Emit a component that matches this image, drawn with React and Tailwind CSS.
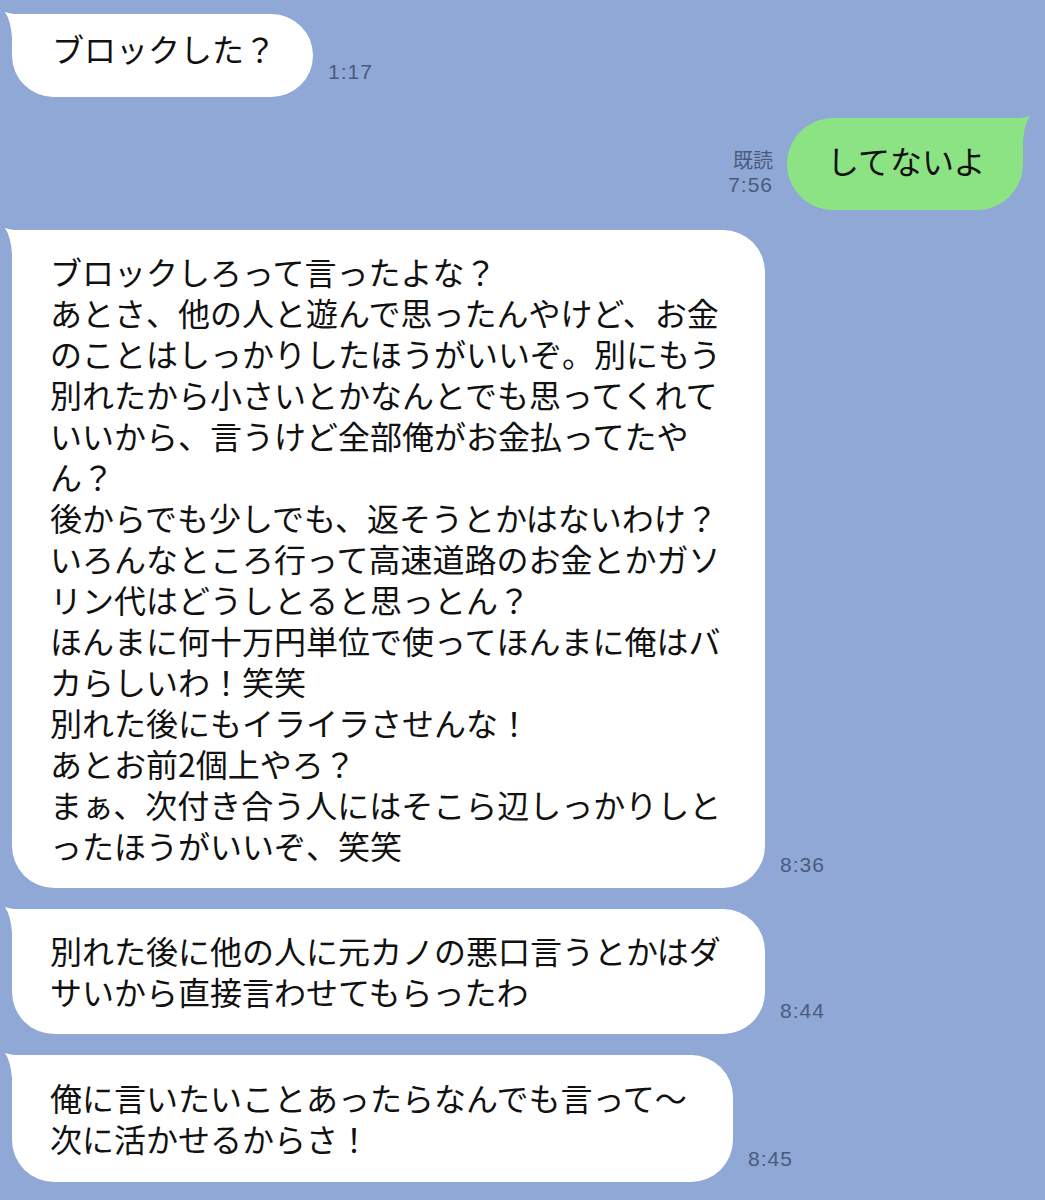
const jp = { fontFamily: '"Noto Sans CJK JP", "Noto Sans", sans-serif' };

const messages = [
  {
    id: 1,
    width: "w-[753px]",
    height: "h-[658px]",
    pad: "pt-[21px]",
    time: "8:36",
    lines: [
      "ブロックしろって言ったよな？",
      "あとさ、他の人と遊んで思ったんやけど、お金",
      "のことはしっかりしたほうがいいぞ。別にもう",
      "別れたから小さいとかなんとでも思ってくれて",
      "いいから、言うけど全部俺がお金払ってたや",
      "ん？",
      "後からでも少しでも、返そうとかはないわけ？",
      "いろんなところ行って高速道路のお金とかガソ",
      "リン代はどうしとると思っとん？",
      "ほんまに何十万円単位で使ってほんまに俺はバ",
      "カらしいわ！笑笑",
      "別れた後にもイライラさせんな！",
      "あとお前2個上やろ？",
      "まぁ、次付き合う人にはそこら辺しっかりしと",
      "ったほうがいいぞ、笑笑",
    ],
  },
  {
    id: 2,
    width: "w-[753px]",
    height: "h-[125px]",
    pad: "pt-[21px]",
    time: "8:44",
    lines: ["別れた後に他の人に元カノの悪口言うとかはダ", "サいから直接言わせてもらったわ"],
  },
  {
    id: 3,
    width: "w-[721px]",
    height: "h-[127px]",
    pad: "pt-[22px]",
    time: "8:45",
    lines: ["俺に言いたいことあったらなんでも言って〜", "次に活かせるからさ！"],
  },
];

const LeftTail = () => (
  <svg
    className="absolute -left-[8px] -top-[2px]"
    width="34"
    height="34"
    viewBox="0 0 34 34"
  >
    <path d="M1 0 Q 14 4 32 2 L 8 2 L 8 26 Q 7 9 1 0 Z" fill="#ffffff" />
  </svg>
);

const RightTail = () => (
  <svg
    className="absolute -right-[8px] -top-[2px]"
    width="34"
    height="34"
    viewBox="0 0 34 34"
  >
    <path d="M33 0 Q 20 4 2 2 L 26 2 L 26 26 Q 27 9 33 0 Z" fill="#8ce383" />
  </svg>
);

const Time = ({ children, className = "" }) => (
  <div
    className={`text-[21px] leading-[24px] tracking-[1px] text-[#4b5b7e] ${className}`}
    style={{ fontFamily: '"Liberation Sans", Arial, sans-serif' }}
  >
    {children}
  </div>
);

export default function App() {
  return (
    <div className="min-h-[1200px] w-[1045px] bg-[#8fa8d5] pt-[14px] overflow-hidden" style={jp}>
      {/* first incoming */}
      <div className="flex items-end pl-3">
        <div className="relative w-[301px] h-[83px] bg-white rounded-[42px] rounded-tl-none pl-[40px] pt-[14px]">
          <LeftTail />
          <div className="text-[32px] leading-[41px] text-[#111] whitespace-nowrap">ブロックした？</div>
        </div>
        <Time className="ml-[15px] mb-[13px]">1:17</Time>
      </div>

      {/* outgoing */}
      <div className="flex items-end justify-end pr-[22px] mt-[21px]">
        <div className="flex flex-col items-end mr-[14px] mb-[13px] text-[#4b5b7e]">
          <div className="text-[20px] leading-[26px]">既読</div>
          <Time className="tracking-[0.5px]">7:56</Time>
        </div>
        <div className="relative w-[236px] h-[92px] bg-[#8ce383] rounded-[46px] rounded-tr-none pl-[40px] pt-[22px]">
          <RightTail />
          <div className="text-[32px] leading-[41px] text-[#111] whitespace-nowrap">してないよ</div>
        </div>
      </div>

      {messages.map((m, i) => (
        <div key={m.id} className={`flex items-end pl-3 ${i === 0 ? "mt-[20px]" : "mt-[21px]"}`}>
          <div className={`relative ${m.width} ${m.height} ${m.pad} bg-white rounded-[42px] rounded-tl-none pl-[38px]`}>
            <LeftTail />
            {m.lines.map((l, j) => (
              <div key={j} className="text-[32px] leading-[41px] text-[#111] whitespace-nowrap">
                {l}
              </div>
            ))}
          </div>
          <Time className="ml-[15px] mb-[11px]">{m.time}</Time>
        </div>
      ))}
    </div>
  );
}
